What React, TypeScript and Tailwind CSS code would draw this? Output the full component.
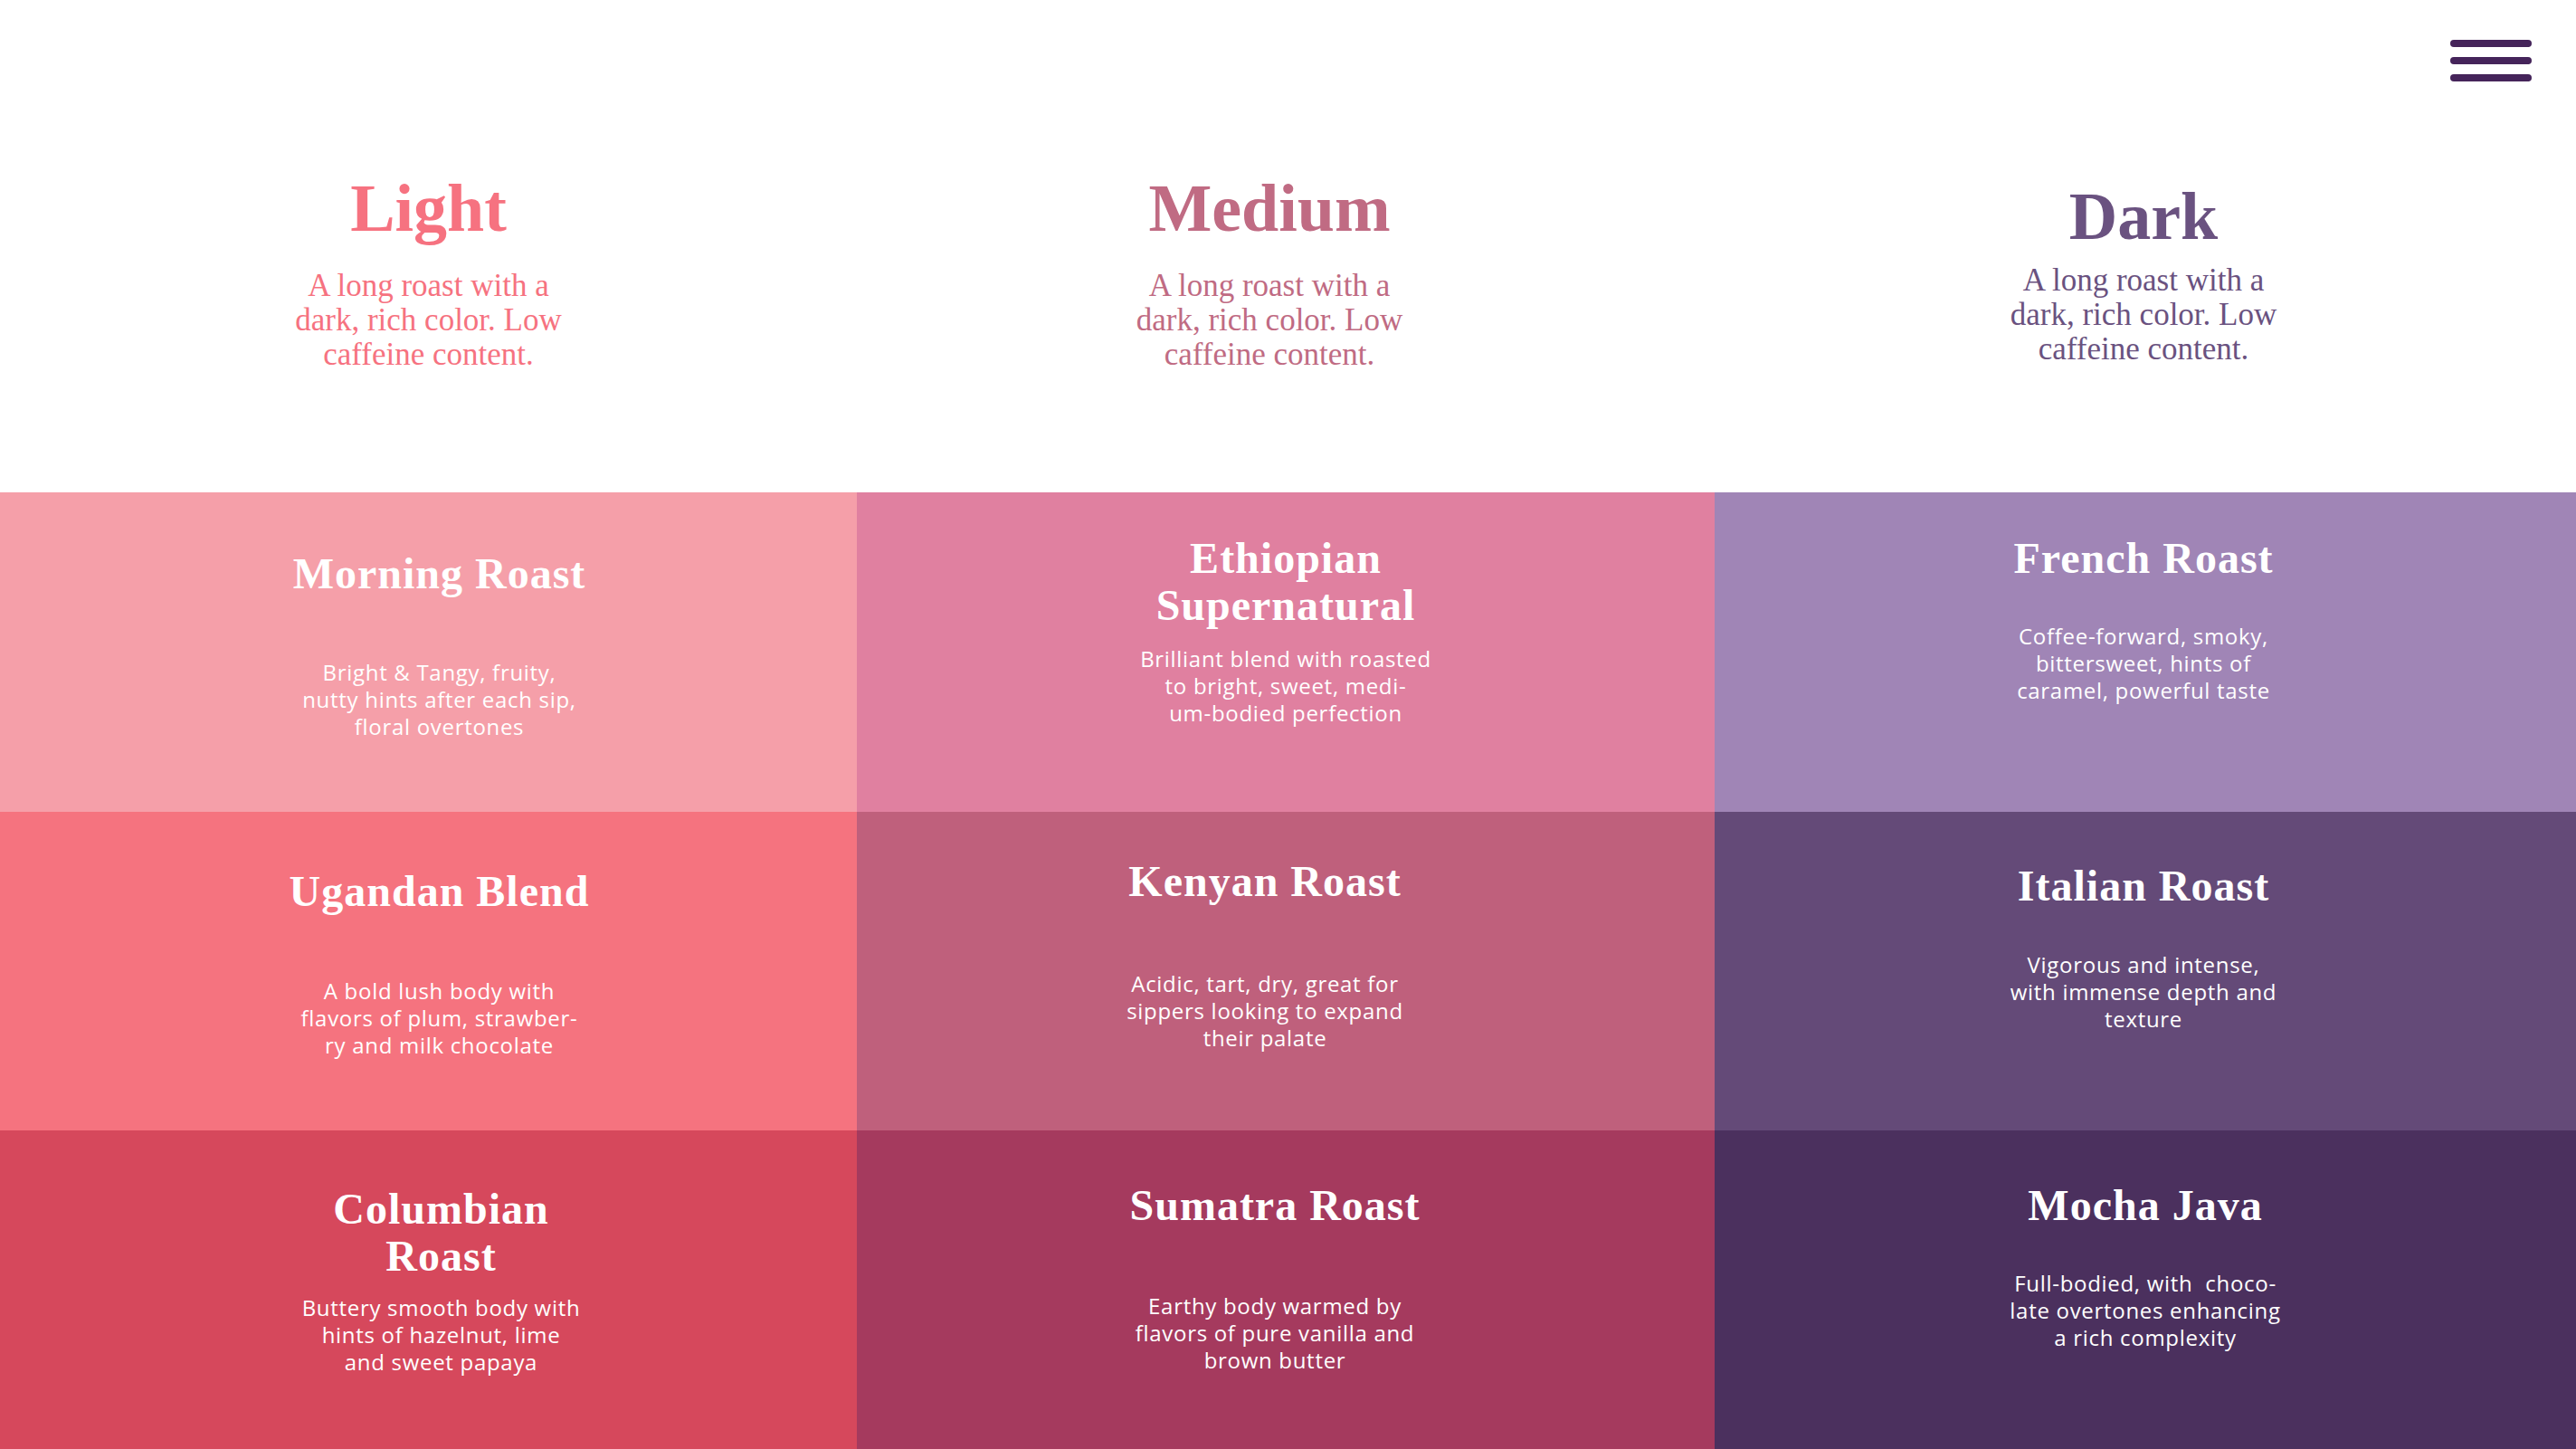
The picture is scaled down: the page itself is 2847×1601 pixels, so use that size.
const serif = "font-['Liberation_Serif',serif]"

const levels = [
  {
    name: "Light",
    color: "text-[#f67280]",
    pad: "pt-0",
    gap: "mt-[30px]",
  },
  {
    name: "Medium",
    color: "text-[#c06b83]",
    pad: "pt-0 pr-[36px]",
    gap: "mt-[30px]",
  },
  {
    name: "Dark",
    color: "text-[#6a5280]",
    pad: "pt-[9px] pr-[4px]",
    gap: "mt-[15px]",
  },
]

const roasts = [
  {
    name: ["Morning Roast"],
    desc: ["Bright & Tangy, fruity,", "nutty hints after each sip,", "floral overtones"],
    bg: "bg-[#f59fa9]",
    pad: "pt-[64px] pl-[24px]",
    gap: "mt-[68px]",
  },
  {
    name: ["Ethiopian", "Supernatural"],
    desc: ["Brilliant blend with roasted", "to bright, sweet, medi-", "um-bodied perfection"],
    bg: "bg-[#e080a0]",
    pad: "pt-[47px]",
    gap: "mt-[18px]",
  },
  {
    name: ["French Roast"],
    desc: ["Coffee-forward, smoky,", "bittersweet, hints of", "caramel, powerful taste"],
    bg: "bg-[#a085b6]",
    pad: "pt-[47px] pr-[4px]",
    gap: "mt-[45px]",
  },
  {
    name: ["Ugandan Blend"],
    desc: ["A bold lush body with", "flavors of plum, strawber-", "ry and milk chocolate"],
    bg: "bg-[#f5737f]",
    pad: "pt-[62px] pl-[24px]",
    gap: "mt-[69px]",
  },
  {
    name: ["Kenyan Roast"],
    desc: ["Acidic, tart, dry, great for", "sippers looking to expand", "their palate"],
    bg: "bg-[#bf607c]",
    pad: "pt-[51px] pr-[46px]",
    gap: "mt-[72px]",
  },
  {
    name: ["Italian Roast"],
    desc: ["Vigorous and intense,", "with immense depth and", "texture"],
    bg: "bg-[#644a78]",
    pad: "pt-[56px] pr-[4px]",
    gap: "mt-[46px]",
  },
  {
    name: ["Columbian", "Roast"],
    desc: ["Buttery smooth body with", "hints of hazelnut, lime", "and sweet papaya"],
    bg: "bg-[#d6485c]",
    pad: "pt-[61px] pl-[28px]",
    gap: "mt-[16px]",
  },
  {
    name: ["Sumatra Roast"],
    desc: ["Earthy body warmed by", "flavors of pure vanilla and", "brown butter"],
    bg: "bg-[#a53a5e]",
    pad: "pt-[57px] pr-[24px]",
    gap: "mt-[70px]",
  },
  {
    name: ["Mocha Java"],
    desc: ["Full-bodied, with  choco-", "late overtones enhancing", "a rich complexity"],
    bg: "bg-[#4b305e]",
    pad: "pt-[57px]",
    gap: "mt-[45px]",
  },
]

function Hamburger() {
  return (
    <button className="flex flex-col gap-[11px] w-[90px]" aria-label="Menu">
      <span className="block h-[8px] w-full rounded-full bg-[#45245a]" />
      <span className="block h-[8px] w-full rounded-full bg-[#45245a]" />
      <span className="block h-[8px] w-full rounded-full bg-[#45245a]" />
    </button>
  )
}

export default function App() {
  return (
    <div className="w-full min-h-screen bg-white overflow-hidden">
      <header className="h-[544px] flex flex-col">
        <nav className="flex justify-end pt-[44px] pr-[49px] h-[90px]">
          <Hamburger />
        </nav>

        <div className="grid grid-cols-[947px_948px_1fr] mt-[103px]">
          {levels.map((level) => (
            <div key={level.name} className={`flex flex-col items-center ${level.pad}`}>
              <h1 className={`${serif} font-bold text-[74px] leading-[74px] ${level.color}`}>
                {level.name}
              </h1>
              <p className={`${serif} ${level.gap} text-[35px] leading-[38px] text-center ${level.color}`}>
                A long roast with a
                <br />
                dark, rich color. Low
                <br />
                caffeine content.
              </p>
            </div>
          ))}
        </div>
      </header>

      <section className="grid grid-cols-[947px_948px_1fr] grid-rows-[353px_352px_352px]">
        {roasts.map((roast) => (
          <div key={roast.name.join(" ")} className={`${roast.bg} ${roast.pad} flex flex-col items-center text-white`}>
            <h2 className={`${serif} font-bold text-[48px] leading-[52px] tracking-[1px] text-center`}>
              {roast.name.map((line) => (
                <span key={line} className="block whitespace-nowrap">
                  {line}
                </span>
              ))}
            </h2>
            <p className={`${roast.gap} font-['Open_Sans',sans-serif] text-[24px] leading-[30px] tracking-[0.7px] text-center`}>
              {roast.desc.map((line) => (
                <span key={line} className="block whitespace-pre">
                  {line}
                </span>
              ))}
            </p>
          </div>
        ))}
      </section>
    </div>
  )
}
